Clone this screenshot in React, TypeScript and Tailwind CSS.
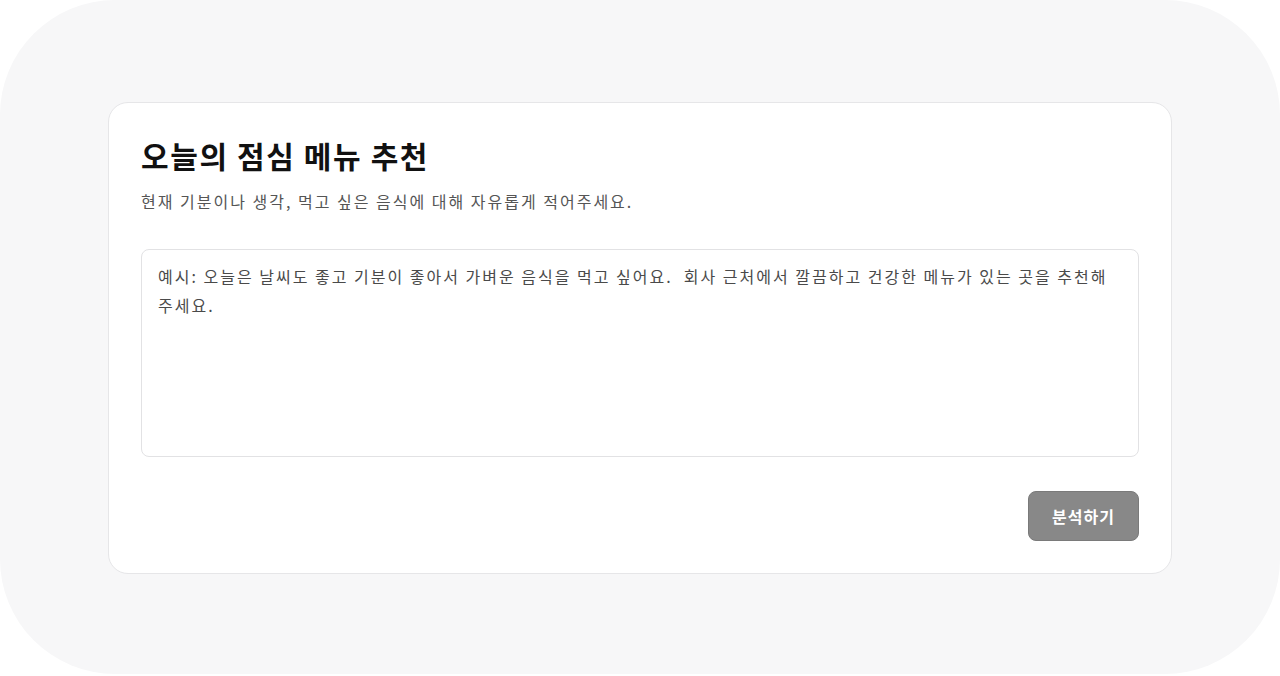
import React, { useState } from 'react';

export default function App() {
  const [text, setText] = useState('');
  const empty = text.trim().length === 0;
  return (
    <div
      className="w-[1280px] h-[676px] bg-white"
      style={{ fontFamily: '"Noto Sans CJK KR", "Noto Sans", sans-serif' }}
    >
      <div className="w-full h-[674px] bg-[#f7f7f8] rounded-[115px] flex items-start justify-center pt-[102px]">
        <div className="w-[1064px] bg-white border border-[#e6e6e8] rounded-[20px] p-8">
          <h1 className="text-[30px] leading-[40px] font-bold tracking-[1.6px] text-[#111]">오늘의 점심 메뉴 추천</h1>
          <p className="mt-3.5 text-base leading-6 tracking-[2px] text-[#555]">
            현재 기분이나 생각, 먹고 싶은 음식에 대해 자유롭게 적어주세요.
          </p>
          <textarea
            value={text}
            onChange={(e) => setText(e.target.value)}
            placeholder="예시: 오늘은 날씨도 좋고 기분이 좋아서 가벼운 음식을 먹고 싶어요.  회사 근처에서 깔끔하고 건강한 메뉴가 있는 곳을 추천해 주세요."
            className="mt-9 block w-full h-[208px] resize-none rounded-lg border border-[#e2e2e4] px-4 py-3 text-base leading-[29px] tracking-[2px] text-[#333] placeholder:text-[#4a4a4a] outline-none"
          />
          <div className="mt-[34px] flex justify-end">
            <button
              disabled={empty}
              className="h-[50px] w-[111px] rounded-lg border border-[#7a7a7a] bg-[#888] text-base font-bold tracking-[1px] text-white"
            >
              분석하기
            </button>
          </div>
        </div>
      </div>
    </div>
  );
}
